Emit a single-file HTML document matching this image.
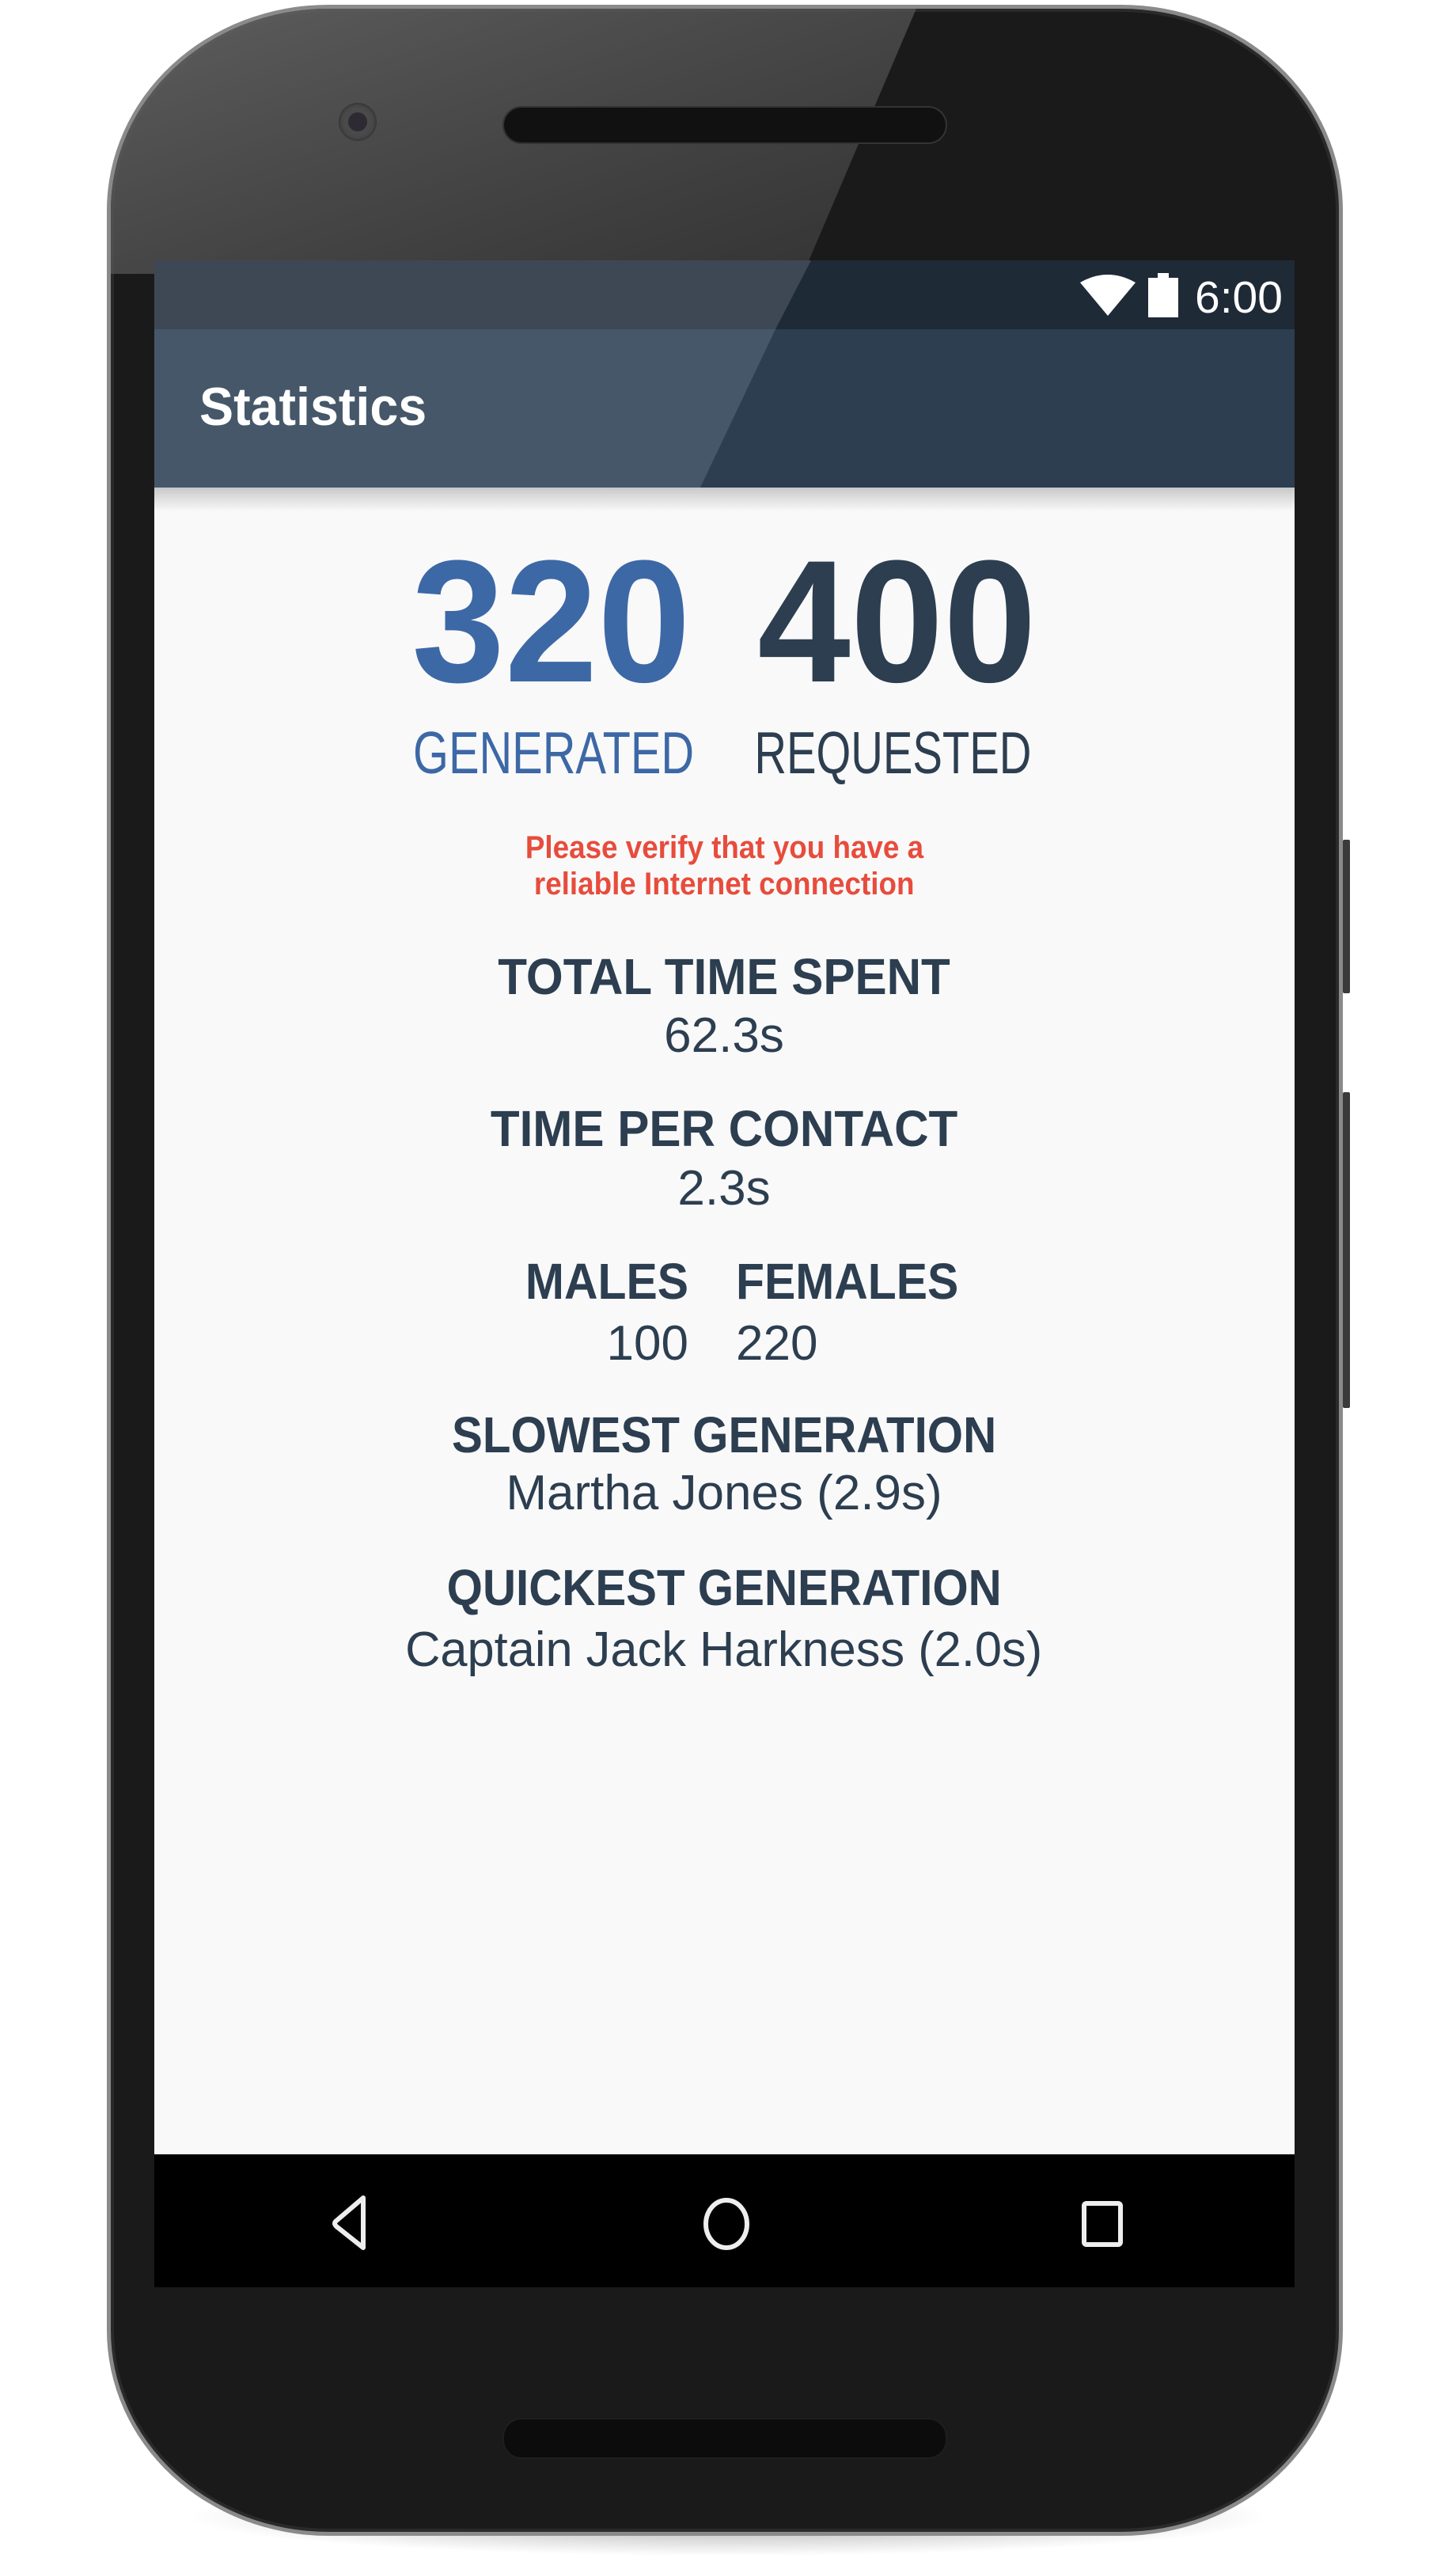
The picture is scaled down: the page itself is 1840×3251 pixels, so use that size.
<!DOCTYPE html>
<html><head><meta charset="utf-8"><style>
*{margin:0;padding:0;box-sizing:border-box}
html,body{width:1840px;height:3251px;background:#fff;overflow:hidden;position:relative;font-family:"Liberation Sans",Roboto,sans-serif}
.abs{position:absolute}
.shadow{left:230px;top:3130px;width:1380px;height:100px;border-radius:50%;background:radial-gradient(ellipse at center,rgba(0,0,0,.35),rgba(0,0,0,0) 70%)}
.body{left:135px;top:6px;width:1562px;height:3198px;border-radius:280px/260px;background:#1a1a1a;border:5px solid #8a8a8a;box-shadow:inset 0 0 0 4px #2a2a2a;overflow:hidden}
.btn{background:#3a3a3a;width:9px;left:1697px;border-radius:2px}
.screen{left:195px;top:329px;width:1441px;height:2561px;background:#f9f9f9;overflow:hidden}
.t{position:absolute;white-space:nowrap;text-align:center;color:#2c3e50}
.c{display:inline-block;transform-origin:center bottom}
</style></head><body>
<div class="abs shadow"></div>
<div class="abs body">
<svg class="abs" style="left:-5px;top:-5px" width="1562" height="400">
 <defs>
  <linearGradient id="g" x1="0" y1="0" x2="1" y2="1">
   <stop offset="0" stop-color="#666" stop-opacity=".9"/>
   <stop offset="1" stop-color="#444" stop-opacity=".6"/>
  </linearGradient>
 </defs>
 <path d="M0 0 L1025 0 L880 340 L0 340 Z" fill="url(#g)"/>
</svg>
</div>
<div class="abs btn" style="top:1061px;height:194px"></div>
<div class="abs btn" style="top:1380px;height:399px"></div>
<div class="abs" style="left:428px;top:130px;width:48px;height:48px;border-radius:50%;background:#4a4a4a;box-shadow:inset 0 0 6px #222"></div>
<div class="abs" style="left:440px;top:142px;width:24px;height:24px;border-radius:50%;background:#2e2a33"></div>
<div class="abs" style="left:635px;top:134px;width:562px;height:48px;border-radius:24px;background:#111;border:2px solid #333"></div>
<div class="abs" style="left:635px;top:3055px;width:562px;height:52px;border-radius:24px;background:#0c0c0c;border:2px solid #1e1e1e"></div>
<div class="abs screen">
 <div class="abs" style="left:0;top:0;width:1445px;height:87px;background:#1f2a37"></div>
 <div class="abs" style="left:0;top:87px;width:1445px;height:200px;background:#2c3e50"></div>
 <svg class="abs" style="left:0;top:0" width="1445" height="287"><path d="M0 0 L830 0 L785 87 L0 87Z" fill="#3e4854"/><path d="M0 87 L785 87 L690 287 L0 287Z" fill="#455769"/></svg>
 <div class="abs" style="left:0;top:287px;width:1445px;height:30px;background:linear-gradient(#c8c8c8,rgba(249,249,249,0))"></div>
 <svg class="abs" style="left:1170px;top:16px" width="130" height="60"><path d="M0 12 Q35 -8 70 12 L35 54 Z" fill="#fff"/><rect x="86" y="6" width="38" height="50" fill="#fff"/><rect x="98" y="0" width="14" height="8" fill="#fff"/></svg>
 <div class="t" style="left:1315px;top:12px;font-size:57px;color:#fff;line-height:70px">6:00</div>
 <div class="t" style="left:57px;top:145px;font-size:68px;color:#fff;font-weight:bold;line-height:80px"><span class="c" style="transform:scaleX(.95);transform-origin:left bottom">Statistics</span></div>
 <div class="t" style="left:318px;top:346px;width:350px;font-size:220px;line-height:220px;font-weight:bold;color:#3d68a6"><span class="c" style="transform:scaleX(.96)">320</span></div>
 <div class="t" style="left:755px;top:346px;width:350px;font-size:220px;line-height:220px;font-weight:bold"><span class="c" style="transform:scaleX(.96)">400</span></div>
 <div class="t" style="left:274px;top:582px;width:400px;font-size:75px;line-height:80px;color:#3d68a6"><span class="c" style="transform:scaleX(.77)">GENERATED</span></div>
 <div class="t" style="left:700px;top:582px;width:400px;font-size:75px;line-height:80px"><span class="c" style="transform:scaleX(.75)">REQUESTED</span></div>
 <div class="t" style="left:320px;top:719px;width:800px;font-size:40px;line-height:46px;font-weight:bold;color:#e74c3c"><span class="c" style="transform:scaleX(.92)">Please verify that you have a</span><br><span class="c" style="transform:scaleX(.92)">reliable Internet connection</span></div>
 <div class="t" style="left:220px;top:867px;width:1000px;font-size:64px;line-height:76px;font-weight:bold"><span class="c" style="transform:scaleX(.94)">TOTAL TIME SPENT</span></div>
 <div class="t" style="left:220px;top:944px;width:1000px;font-size:62px;line-height:72px">62.3s</div>
 <div class="t" style="left:220px;top:1059px;width:1000px;font-size:64px;line-height:76px;font-weight:bold"><span class="c" style="transform:scaleX(.94)">TIME PER CONTACT</span></div>
 <div class="t" style="left:220px;top:1137px;width:1000px;font-size:62px;line-height:72px">2.3s</div>
 <div class="t" style="left:375px;top:1252px;width:300px;text-align:right;font-size:64px;line-height:76px;font-weight:bold"><span class="c" style="transform:scaleX(.92);transform-origin:right bottom">MALES</span></div>
 <div class="t" style="left:735px;top:1252px;width:400px;text-align:left;font-size:64px;line-height:76px;font-weight:bold"><span class="c" style="transform:scaleX(.92);transform-origin:left bottom">FEMALES</span></div>
 <div class="t" style="left:475px;top:1333px;width:200px;text-align:right;font-size:62px;line-height:72px">100</div>
 <div class="t" style="left:735px;top:1333px;width:200px;text-align:left;font-size:62px;line-height:72px">220</div>
 <div class="t" style="left:220px;top:1446px;width:1000px;font-size:64px;line-height:76px;font-weight:bold"><span class="c" style="transform:scaleX(.91)">SLOWEST GENERATION</span></div>
 <div class="t" style="left:220px;top:1522px;width:1000px;font-size:62px;line-height:72px">Martha Jones (2.9s)</div>
 <div class="t" style="left:220px;top:1639px;width:1000px;font-size:64px;line-height:76px;font-weight:bold"><span class="c" style="transform:scaleX(.91)">QUICKEST GENERATION</span></div>
 <div class="t" style="left:220px;top:1720px;width:1000px;font-size:62px;line-height:72px"><span class="c" style="transform:scaleX(.99)">Captain Jack Harkness (2.0s)</span></div>
 <div class="abs" style="left:0;top:2393px;width:1445px;height:168px;background:#000"></div>
 <svg class="abs" style="left:0;top:2393px" width="1445" height="168">
  <path d="M264 55 L264 118 L230 91 Q226 87 230 84 Z" fill="none" stroke="#eee" stroke-width="6" stroke-linejoin="round"/>
  <ellipse cx="723" cy="88" rx="26" ry="30" fill="none" stroke="#eee" stroke-width="6"/>
  <rect x="1175" y="62" width="46" height="52" rx="3" fill="none" stroke="#eee" stroke-width="6"/>
 </svg>
</div>
</body></html>
